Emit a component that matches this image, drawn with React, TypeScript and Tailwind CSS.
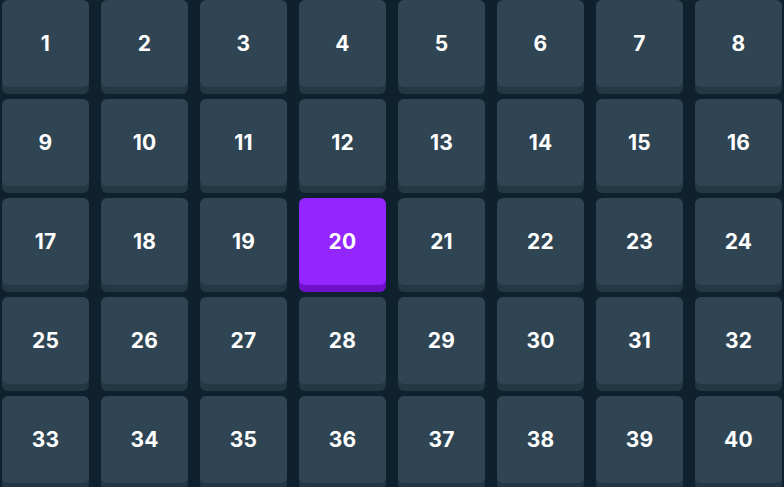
const numbers = Array.from({ length: 40 }, (_, i) => i + 1);
const picked = 20;

function Tile({ n }: { n: number }) {
  const active = n === picked;
  return (
    <button
      className={`h-[87px] w-[87px] rounded-md flex items-center justify-center text-[21px] font-bold tracking-[0.01em] text-white ${
        active
          ? "bg-[#9325ff] shadow-[0_7px_0_#7010c8]"
          : "bg-[#2f4553] shadow-[0_7px_0_#233844]"
      }`}
    >
      {n}
    </button>
  );
}

export default function App() {
  return (
    <div
      className="h-[487px] w-[784px] overflow-hidden bg-[#0f212e] pl-[2px]"
      style={{ fontFamily: "Inter, 'Noto Sans', sans-serif" }}
    >
      <div className="grid grid-cols-[repeat(8,87px)] gap-[12px]">
        {numbers.map((n) => (
          <Tile key={n} n={n} />
        ))}
      </div>
    </div>
  );
}
